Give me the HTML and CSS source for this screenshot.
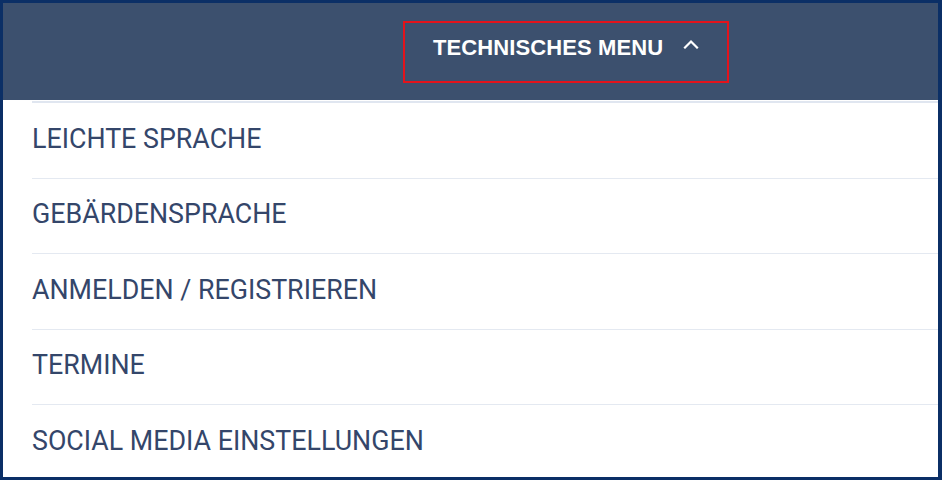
FILE: index.html
```html
<!DOCTYPE html>
<html lang="de">
<head>
<meta charset="utf-8">
<link rel="stylesheet" href="styles.css">
</head>
<body>
<div class="frame">
  <header class="topbar">
    <button class="techmenu" type="button">
      <span class="techmenu-label">TECHNISCHES MENU</span>
      <svg class="chev" width="16" height="10" viewBox="0 0 16 10"><path d="M2 8.5 L8 2.5 L14 8.5" fill="none" stroke="#fff" stroke-width="2.2" stroke-linecap="square"/></svg>
    </button>
  </header>
  <ul class="menu">
    <li class="item">LEICHTE SPRACHE</li>
    <li class="item">GEBÄRDENSPRACHE</li>
    <li class="item">ANMELDEN / REGISTRIEREN</li>
    <li class="item">TERMINE</li>
    <li class="item">SOCIAL MEDIA EINSTELLUNGEN</li>
  </ul>
</div>
</body>
</html>
```
FILE: styles.css
```css
html, body {
  margin: 0;
  padding: 0;
}
body {
  width: 942px;
  height: 480px;
  overflow: hidden;
  background: #ffffff;
  font-family: Roboto, "Liberation Sans", sans-serif;
}
.frame {
  box-sizing: border-box;
  width: 942px;
  height: 480px;
  border-style: solid;
  border-color: #0b2f66;
  border-width: 3px 4px 3px 3px;
  background: #ffffff;
  display: flex;
  flex-direction: column;
}
.topbar {
  height: 97px;
  flex: none;
  background: #3c506e;
  display: flex;
  align-items: flex-start;
  padding-left: 400px;
  padding-top: 18px;
  box-sizing: border-box;
}
.techmenu {
  box-sizing: border-box;
  width: 326px;
  height: 62px;
  border: 2px solid #e3131b;
  background: transparent;
  display: flex;
  align-items: flex-start;
  padding: 12px 0 0 28px;
  gap: 20px;
  font-family: "Liberation Sans", Arial, sans-serif;
  cursor: pointer;
}
.techmenu-label {
  color: #ffffff;
  font-weight: 700;
  font-size: 22px;
  line-height: 25px;
  letter-spacing: 0.1px;
}
.chev {
  margin-top: 4px;
}
.menu {
  list-style: none;
  margin: 0;
  padding: 1px 0 0 29px;
}
.item {
  border-top: 1.5px solid #e4e9f1;
  height: 75.5px;
  box-sizing: border-box;
  display: flex;
  align-items: center;
  padding-bottom: 3px;
  color: #34466a;
  font-size: 26.8px;
  letter-spacing: 0;
}
.item:first-child {
  border-top: 2px solid #e0e6f0;
  height: 76.5px;
}
```
